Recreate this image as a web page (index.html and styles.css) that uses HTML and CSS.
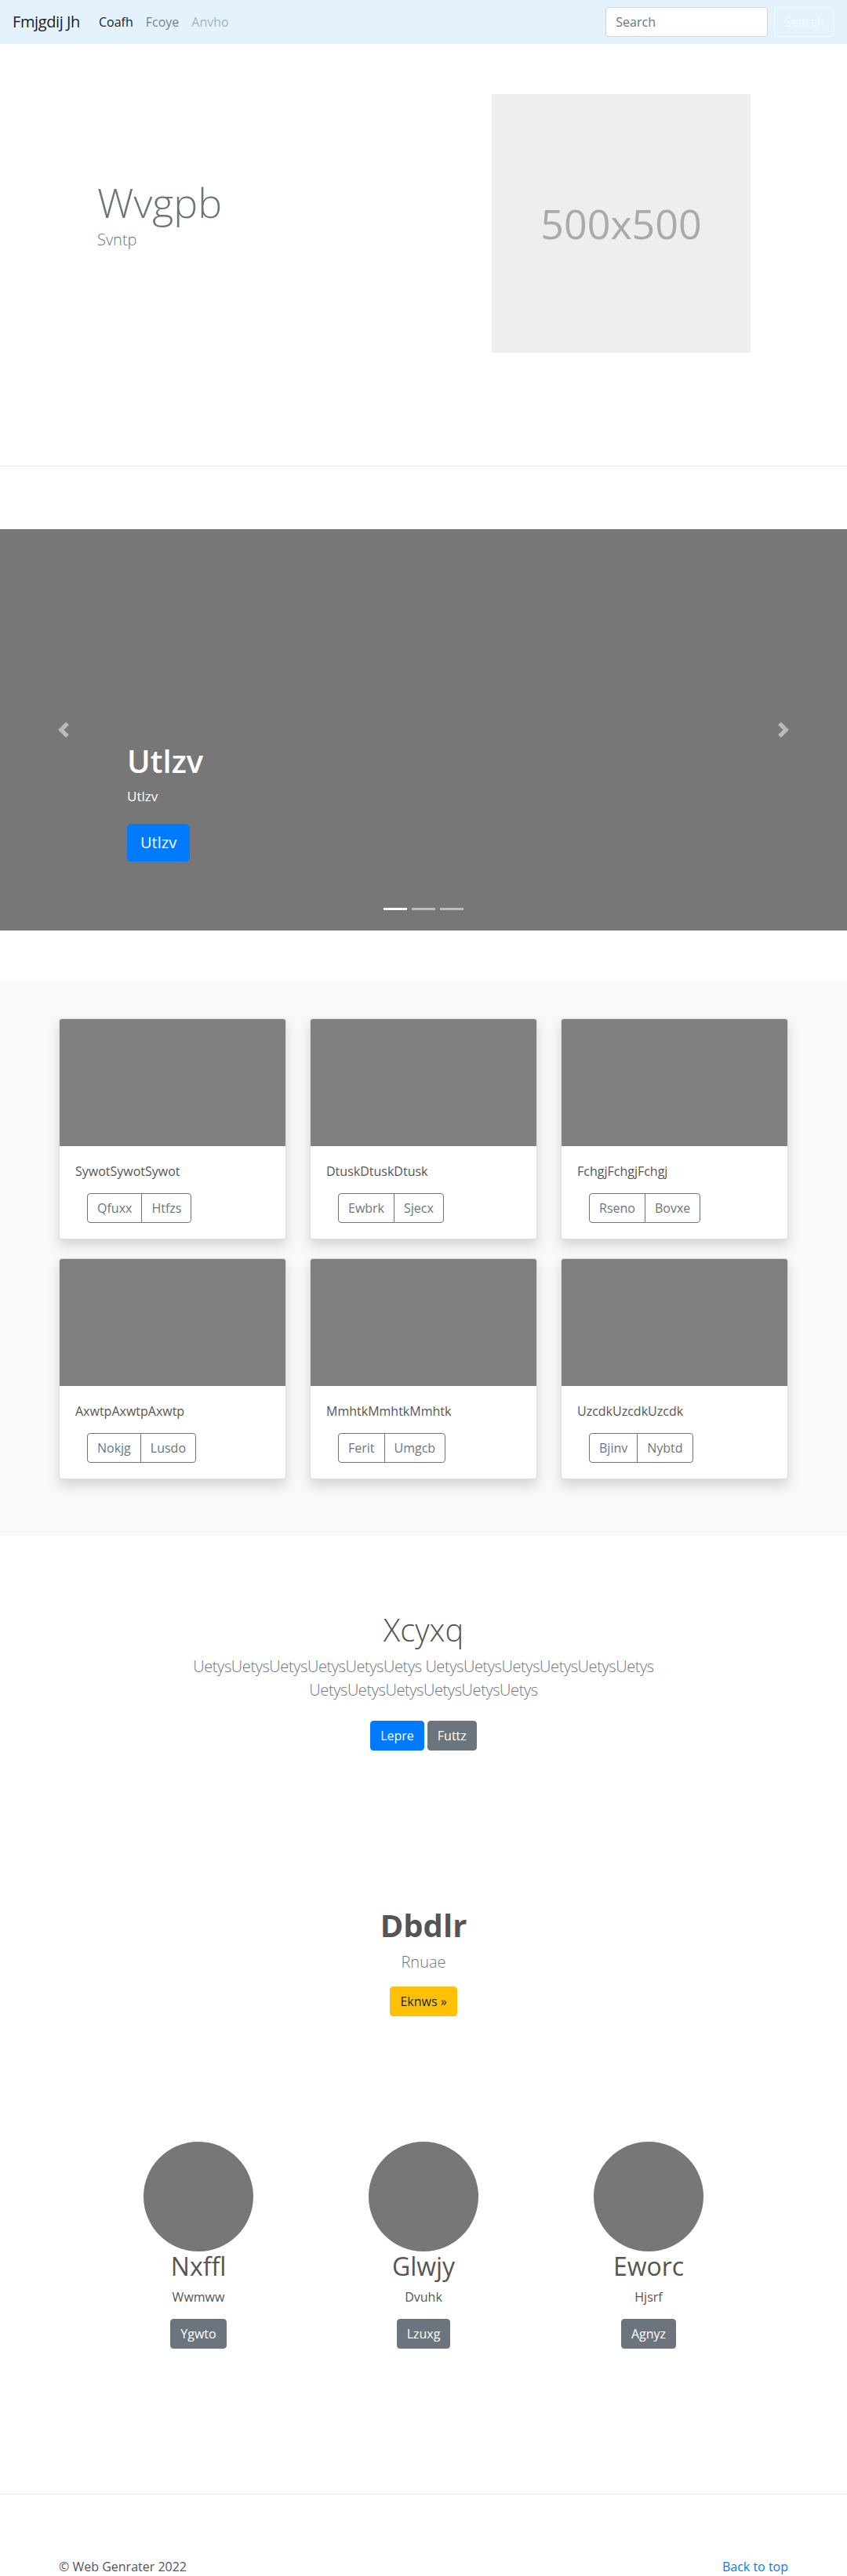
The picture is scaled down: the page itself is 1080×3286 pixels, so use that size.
FILE: index.html
```html
<!DOCTYPE html>
<html lang="en">
<head>
<meta charset="utf-8">
<title>Fmjgdij Jh</title>
<link rel="stylesheet" href="styles.css">
</head>
<body>
<nav class="navbar">
  <a class="brand" href="#">Fmjgdij Jh</a>
  <ul class="nav-links">
    <li><a class="nav-link active" href="#">Coafh</a></li>
    <li><a class="nav-link" href="#">Fcoye</a></li>
    <li><a class="nav-link disabled" href="#">Anvho</a></li>
  </ul>
  <form class="search">
    <input class="search-input" type="text" placeholder="Search">
    <button class="search-btn" type="button">Search</button>
  </form>
</nav>

<section class="hero">
  <div class="container hero-row">
    <div class="hero-text">
      <h1 class="hero-title">Wvgpb</h1>
      <p class="hero-sub">Svntp</p>
    </div>
    <div class="hero-media">
      <div class="placeholder">500x500</div>
    </div>
  </div>
</section>

<hr class="divider">

<div class="carousel">
  <a class="carousel-control prev" href="#">
    <svg width="20" height="20" viewBox="0 0 8 8"><path fill="#fff" d="M5.25 0l-4 4 4 4 1.5-1.5L4.25 4l2.5-2.5L5.25 0z"/></svg>
  </a>
  <a class="carousel-control next" href="#">
    <svg width="20" height="20" viewBox="0 0 8 8"><path fill="#fff" d="M2.75 0l-1.5 1.5L3.75 4l-2.5 2.5L2.75 8l4-4-4-4z"/></svg>
  </a>
  <div class="carousel-caption">
    <h1 class="caption-title">Utlzv</h1>
    <p class="caption-text">Utlzv</p>
    <div class="caption-action"><a class="btn btn-lg btn-primary" href="#">Utlzv</a></div>
  </div>
  <ol class="carousel-indicators">
    <li class="active"></li>
    <li></li>
    <li></li>
  </ol>
</div>

<section class="album">
  <div class="container album-grid">
    <div class="card">
      <div class="card-img"></div>
      <div class="card-body">
        <p class="card-text">SywotSywotSywot</p>
        <div class="btn-group"><a class="btn btn-outline" href="#">Qfuxx</a><a class="btn btn-outline" href="#">Htfzs</a></div>
      </div>
    </div>
    <div class="card">
      <div class="card-img"></div>
      <div class="card-body">
        <p class="card-text">DtuskDtuskDtusk</p>
        <div class="btn-group"><a class="btn btn-outline" href="#">Ewbrk</a><a class="btn btn-outline" href="#">Sjecx</a></div>
      </div>
    </div>
    <div class="card">
      <div class="card-img"></div>
      <div class="card-body">
        <p class="card-text">FchgjFchgjFchgj</p>
        <div class="btn-group"><a class="btn btn-outline" href="#">Rseno</a><a class="btn btn-outline" href="#">Bovxe</a></div>
      </div>
    </div>
    <div class="card">
      <div class="card-img"></div>
      <div class="card-body">
        <p class="card-text">AxwtpAxwtpAxwtp</p>
        <div class="btn-group"><a class="btn btn-outline" href="#">Nokjg</a><a class="btn btn-outline" href="#">Lusdo</a></div>
      </div>
    </div>
    <div class="card">
      <div class="card-img"></div>
      <div class="card-body">
        <p class="card-text">MmhtkMmhtkMmhtk</p>
        <div class="btn-group"><a class="btn btn-outline" href="#">Ferit</a><a class="btn btn-outline" href="#">Umgcb</a></div>
      </div>
    </div>
    <div class="card">
      <div class="card-img"></div>
      <div class="card-body">
        <p class="card-text">UzcdkUzcdkUzcdk</p>
        <div class="btn-group"><a class="btn btn-outline" href="#">Bjinv</a><a class="btn btn-outline" href="#">Nybtd</a></div>
      </div>
    </div>
  </div>
</section>

<section class="intro">
  <div class="intro-inner">
    <h1 class="intro-title">Xcyxq</h1>
    <p class="lead">UetysUetysUetysUetysUetysUetys UetysUetysUetysUetysUetysUetys UetysUetysUetysUetysUetysUetys</p>
    <div class="intro-actions">
      <a class="btn btn-primary" href="#">Lepre</a>
      <a class="btn btn-secondary" href="#">Futtz</a>
    </div>
  </div>
</section>

<section class="cta">
  <h1 class="cta-title">Dbdlr</h1>
  <p class="lead">Rnuae</p>
  <div><a class="btn btn-warning" href="#">Eknws &raquo;</a></div>
</section>

<section class="marketing">
  <div class="member">
    <div class="avatar"></div>
    <h2 class="member-name">Nxffl</h2>
    <p class="member-role">Wwmww</p>
    <div class="member-action"><a class="btn btn-secondary" href="#">Ygwto</a></div>
  </div>
  <div class="member">
    <div class="avatar"></div>
    <h2 class="member-name">Glwjy</h2>
    <p class="member-role">Dvuhk</p>
    <div class="member-action"><a class="btn btn-secondary" href="#">Lzuxg</a></div>
  </div>
  <div class="member">
    <div class="avatar"></div>
    <h2 class="member-name">Eworc</h2>
    <p class="member-role">Hjsrf</p>
    <div class="member-action"><a class="btn btn-secondary" href="#">Agnyz</a></div>
  </div>
</section>

<hr class="divider">

<footer class="container footer">
  <p class="footer-copy">&copy; Web Genrater 2022</p>
  <p class="footer-top"><a href="#">Back to top</a></p>
</footer>
</body>
</html>
```

FILE: styles.css
```css
* { box-sizing: border-box; }

body {
  margin: 0;
  font-family: "Open Sans", "Noto Sans", "Liberation Sans", sans-serif;
  font-size: 16px;
  line-height: 1.5;
  color: #555;
  background: #fff;
}

a { text-decoration: none; }

.container {
  width: 960px;
  margin: 0 auto;
  padding: 0 15px;
}

/* Navbar */
.navbar {
  height: 56px;
  background: #e3f2fd;
  display: flex;
  align-items: center;
  padding: 8px 16px;
}
.brand {
  font-size: 20px;
  line-height: 30px;
  color: rgba(0, 0, 0, .9);
  margin-right: 16px;
  letter-spacing: -0.02em;
}
.nav-links {
  display: flex;
  list-style: none;
  margin: 0;
  padding: 0;
}
.nav-link {
  display: block;
  padding: 8px;
  color: rgba(0, 0, 0, .5);
}
.nav-link.active { color: rgba(0, 0, 0, .9); }
.nav-link.disabled { color: rgba(0, 0, 0, .3); }

.search {
  margin-left: auto;
  display: flex;
  gap: 8px;
}
.search-input {
  width: 207px;
  height: 38px;
  padding: 6px 12px;
  font: inherit;
  color: #495057;
  background: #fff;
  border: 1px solid #ced4da;
  border-radius: 4px;
}
.search-input::placeholder { color: #6c757d; }
.search-btn {
  height: 38px;
  padding: 6px 12px;
  font: inherit;
  color: #f8f9fa;
  background: transparent;
  border: 1px solid #f8f9fa;
  border-radius: 4px;
}

/* Hero */
.hero { padding: 64px 0; }
.hero-row { display: flex; }
.hero-text {
  flex: 0 0 465px;
  padding-left: 49px;
  padding-top: 107px;
}
.hero-title {
  font-size: 52px;
  font-weight: 300;
  line-height: 1.2;
  margin: 0 0 2px;
  color: #6c757d;
}
.hero-sub {
  font-size: 20px;
  font-weight: 300;
  margin: 0;
  color: #6c757d;
}
.hero-media { padding-left: 87px; }
.placeholder {
  width: 330px;
  height: 330px;
  background: #eee;
  color: #aaa;
  font-size: 52px;
  display: flex;
  align-items: center;
  justify-content: center;
}

.divider {
  margin: 80px 0;
  border: 0;
  border-top: 1px solid rgba(0, 0, 0, .1);
}

/* Carousel */
.carousel {
  position: relative;
  height: 512px;
  background: #777;
  margin-bottom: 64px;
  overflow: hidden;
}
.carousel-control {
  position: absolute;
  top: 0;
  bottom: 0;
  width: 15%;
  display: flex;
  align-items: center;
  justify-content: center;
  opacity: .5;
}
.carousel-control.prev { left: 0; }
.carousel-control.next { right: 0; }
.carousel-caption {
  position: absolute;
  left: 15%;
  right: 15%;
  bottom: 52px;
  padding: 20px 0;
  color: #fff;
}
.caption-title {
  font-size: 40px;
  font-weight: 600;
  line-height: 1.2;
  margin: 0 0 8px;
}
.caption-text {
  font-size: 17px;
  margin: 0 0 23px;
}
.caption-action {
  display: flex;
  margin-bottom: 16px;
}
.carousel-indicators {
  position: absolute;
  left: 0;
  right: 0;
  bottom: 0;
  margin: 0 0 16px;
  padding: 0;
  list-style: none;
  display: flex;
  justify-content: center;
}
.carousel-indicators li {
  width: 30px;
  height: 3px;
  margin: 10px 3px;
  background: #fff;
  opacity: .5;
}
.carousel-indicators li.active { opacity: 1; }

/* Buttons */
.btn {
  display: inline-block;
  padding: 6px 12px;
  font-size: 16px;
  line-height: 24px;
  border: 1px solid transparent;
  border-radius: 4px;
  text-align: center;
}
.btn-lg {
  padding: 8px 16px;
  font-size: 20px;
  line-height: 30px;
  border-radius: 5px;
}
.btn-primary { background: #007bff; border-color: #007bff; color: #fff; }
.btn-secondary { background: #6c757d; border-color: #6c757d; color: #fff; }
.btn-warning { background: #ffc107; border-color: #ffc107; color: #212529; }
.btn-outline { color: #6c757d; border-color: #6c757d; background: transparent; }

/* Album */
.album {
  background: #f8f9fa;
  padding: 48px 0 72px;
}
.album-grid {
  display: grid;
  grid-template-columns: repeat(3, 1fr);
  gap: 24px 30px;
}
.card {
  background: #fff;
  border: 1px solid rgba(0, 0, 0, .125);
  border-radius: 4px;
  box-shadow: 0 8px 16px rgba(0, 0, 0, .15);
  overflow: hidden;
}
.card-img {
  height: 162px;
  background: #808080;
}
.card-body { padding: 20px; }
.card-text { margin: 0 0 16px; }
.btn-group {
  display: inline-flex;
  margin-left: 15px;
}
.btn-group .btn:first-child {
  border-top-right-radius: 0;
  border-bottom-right-radius: 0;
}
.btn-group .btn + .btn {
  margin-left: -1px;
  border-top-left-radius: 0;
  border-bottom-left-radius: 0;
}

/* Intro */
.intro {
  padding: 96px 0;
  text-align: center;
}
.intro-inner {
  max-width: 660px;
  margin: 0 auto;
}
.intro-title {
  font-size: 40px;
  font-weight: 300;
  line-height: 1.2;
  margin: 0 0 8px;
}
.lead {
  font-size: 20px;
  font-weight: 300;
  color: #6c757d;
  margin: 0 0 16px;
}
.intro .lead { letter-spacing: -0.02em; }
.intro-actions {
  display: flex;
  justify-content: center;
  gap: 4px;
  padding: 8px 0;
}

/* CTA */
.cta {
  padding: 95px 0 160px;
  text-align: center;
}
.cta-title {
  font-size: 40px;
  font-weight: 700;
  line-height: 1.2;
  margin: 0 0 8px;
  color: #555;
}

/* Marketing */
.marketing {
  width: 861px;
  margin: 0 auto;
  display: grid;
  grid-template-columns: repeat(3, 1fr);
  padding-bottom: 89px;
  text-align: center;
}
.avatar {
  width: 140px;
  height: 140px;
  border-radius: 50%;
  background: #777;
  margin: 0 auto;
}
.member-name {
  font-size: 32px;
  font-weight: 400;
  line-height: 1.2;
  margin: 0 0 8px;
}
.member-role { margin: 0 0 16px; }
.member-action {
  display: flex;
  justify-content: center;
  margin-bottom: 16px;
}

/* Footer */
.footer {
  display: flex;
  justify-content: space-between;
}
.footer p { margin: 0 0 16px; }
.footer-top a { color: #007bff; }
```
